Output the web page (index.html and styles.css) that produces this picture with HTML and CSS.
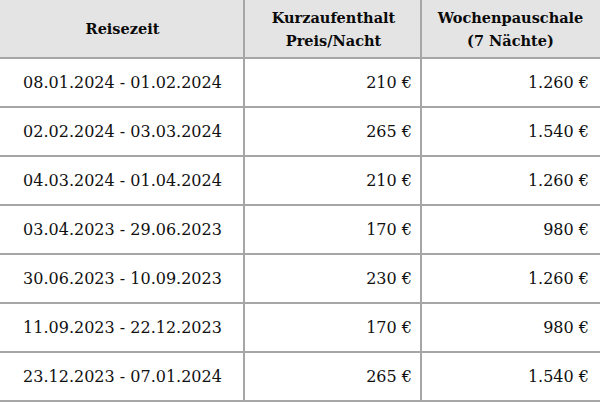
FILE: index.html
```html
<!DOCTYPE html>
<html lang="de">
<head>
<meta charset="utf-8">
<link rel="stylesheet" href="styles.css">
</head>
<body>
<table class="prices">
  <colgroup>
    <col class="c1"><col class="c2"><col class="c3">
  </colgroup>
  <thead>
    <tr>
      <th>Reisezeit</th>
      <th>Kurzaufenthalt<br>Preis/Nacht</th>
      <th>Wochenpauschale<br>(7 Nächte)</th>
    </tr>
  </thead>
  <tbody>
    <tr><td class="date">08.01.2024 - 01.02.2024</td><td class="num">210 €</td><td class="num">1.260 €</td></tr>
    <tr><td class="date">02.02.2024 - 03.03.2024</td><td class="num">265 €</td><td class="num">1.540 €</td></tr>
    <tr><td class="date">04.03.2024 - 01.04.2024</td><td class="num">210 €</td><td class="num">1.260 €</td></tr>
    <tr><td class="date">03.04.2023 - 29.06.2023</td><td class="num">170 €</td><td class="num">980 €</td></tr>
    <tr><td class="date">30.06.2023 - 10.09.2023</td><td class="num">230 €</td><td class="num">1.260 €</td></tr>
    <tr><td class="date">11.09.2023 - 22.12.2023</td><td class="num">170 €</td><td class="num">980 €</td></tr>
    <tr><td class="date">23.12.2023 - 07.01.2024</td><td class="num">265 €</td><td class="num">1.540 €</td></tr>
  </tbody>
</table>
</body>
</html>
```
FILE: styles.css
```css
html, body {
  margin: 0;
  padding: 0;
  background: #ffffff;
}
.prices {
  border-collapse: collapse;
  table-layout: fixed;
  width: 600px;
  font-family: "DejaVu Serif", "Liberation Serif", serif;
  color: #111111;
  font-size: 16px;
}
.c1 { width: 244px; }
.c2 { width: 177px; }
.c3 { width: 179px; }
.prices th, .prices td {
  border-bottom: 2px solid #a6a6a6;
  border-right: 2px solid #a6a6a6;
  padding: 0 8px 0 10px;
}
.prices th:last-child, .prices td:last-child {
  border-right: none;
  padding-right: 11px;
}
.prices thead tr {
  height: 58px;
}
.prices th {
  background: #e4e4e4;
  font-weight: bold;
  text-align: center;
  line-height: 23px;
  font-size: 14.5px;
  color: #0a0a0a;
}
.prices tbody tr {
  height: 49px;
}
.date {
  text-align: center;
}
.num {
  text-align: right;
}
```
